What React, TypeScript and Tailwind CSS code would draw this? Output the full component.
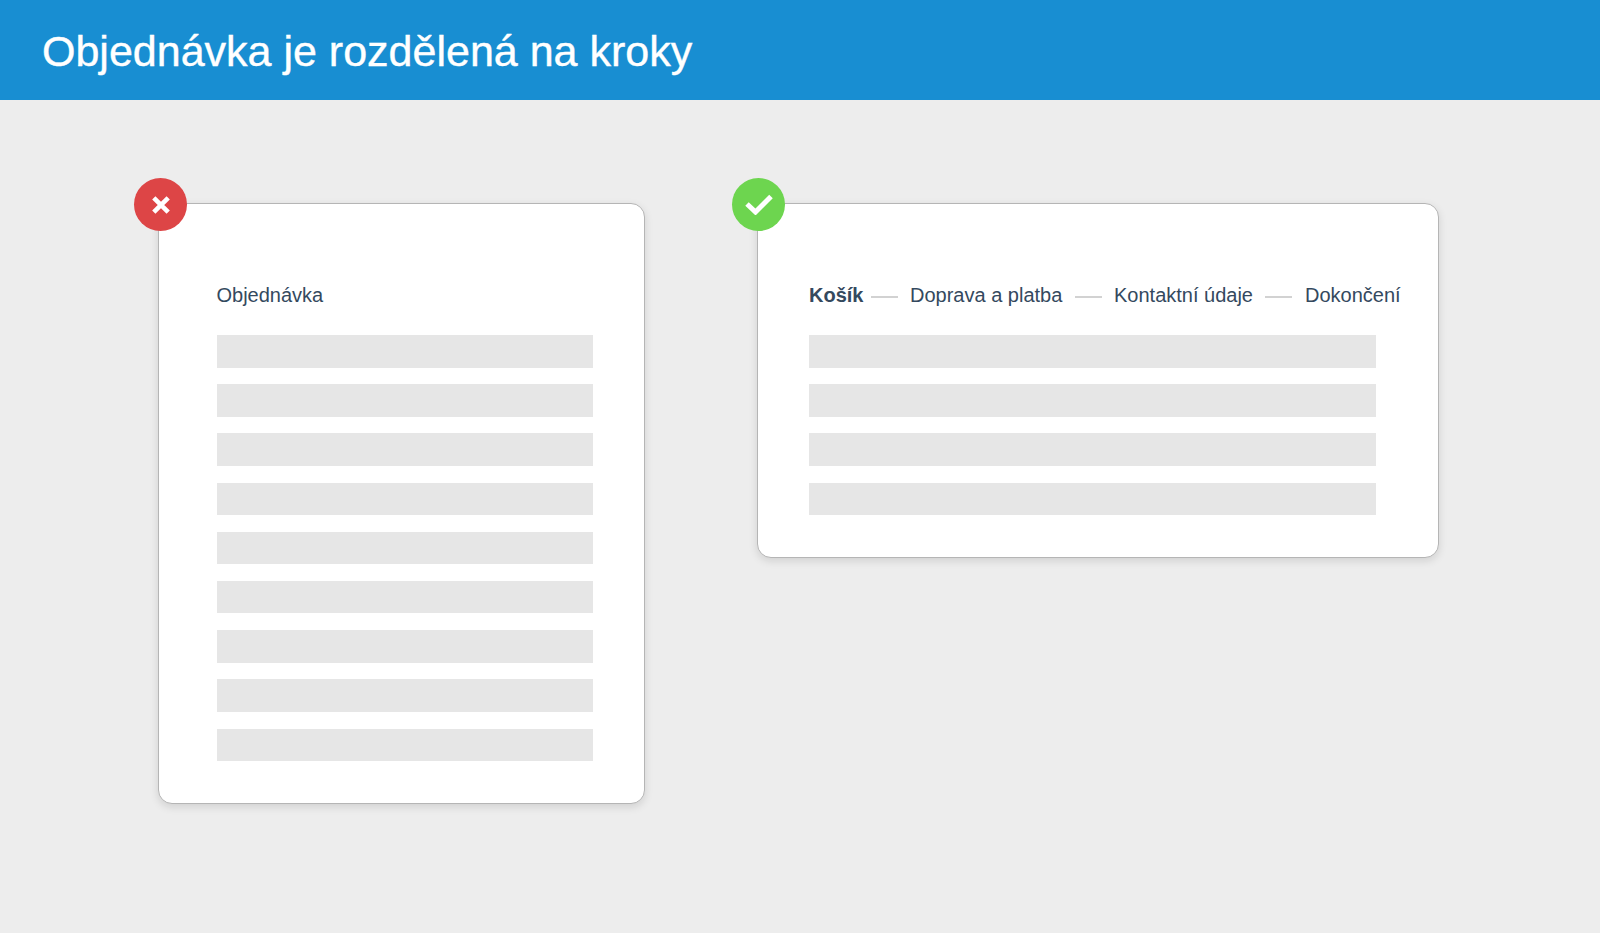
const BAR = "h-[32.5px] bg-[#e6e6e6]";

function Bars({ count, width }: { count: number; width: string }) {
  return (
    <div className="flex flex-col gap-[16.7px]">
      {Array.from({ length: count }).map((_, i) => (
        <div key={i} className={`${BAR} ${width}`} />
      ))}
    </div>
  );
}

function Dash() {
  return <div className="h-[2px] mt-[3px] w-[27px] bg-[#d2d2d2] shrink-0" />;
}

export default function App() {
  return (
    <div className="w-[1600px] h-[933px] overflow-hidden bg-[#ededed] font-['Liberation_Sans',Arial,sans-serif]">
      <header className="h-[100px] bg-[#188ed2] flex items-center pl-[42px] pt-[2px]">
        <h1 className="text-[43px] leading-none text-white font-normal [-webkit-text-stroke:0.4px_white]">Objednávka je rozdělená na kroky</h1>
      </header>
      <main className="flex items-start pl-[158px] pt-[103px] gap-[112px]">
        <section className="relative w-[487px] h-[601px] bg-white rounded-[14px] border border-[#b5b5b5] shadow-[0_3px_8px_rgba(0,0,0,0.12)] pl-[57.5px] pt-[79px]">
          <div className="absolute left-[-25px] top-[-26px] w-[53px] h-[53px] rounded-full bg-[#dd4546] flex items-center justify-center">
            <svg width="20" height="20" viewBox="0 0 20 20">
              <path d="M2.8 2.8L17.2 17.2M17.2 2.8L2.8 17.2" stroke="white" strokeWidth="4.6" strokeLinecap="butt" fill="none" />
            </svg>
          </div>
          <div className="h-[24px] leading-[24px] text-[20px] text-[#34495e]">Objednávka</div>
          <div className="mt-[28px]">
            <Bars count={9} width="w-[376px]" />
          </div>
        </section>
        <section className="relative w-[682px] h-[355px] bg-white rounded-[14px] border border-[#b5b5b5] shadow-[0_3px_8px_rgba(0,0,0,0.12)] pl-[51px] pt-[79px]">
          <div className="absolute left-[-26px] top-[-26px] w-[53px] h-[53px] rounded-full bg-[#6dd54f] flex items-center justify-center">
            <svg className="mb-[2px]" width="28" height="22" viewBox="0 0 28 22">
              <path d="M2 11L10.5 19L26 3.5" stroke="white" strokeWidth="5" fill="none" />
            </svg>
          </div>
          <div className="h-[24px] leading-[24px] text-[20px] text-[#34495e] flex items-center whitespace-nowrap">
            <span className="font-bold w-[62px]">Košík</span>
            <Dash />
            <span className="ml-[12px] w-[165px]">Doprava a platba</span>
            <Dash />
            <span className="ml-[12px] w-[151px]">Kontaktní údaje</span>
            <Dash />
            <span className="ml-[13px]">Dokončení</span>
          </div>
          <div className="mt-[28px]">
            <Bars count={4} width="w-[567px]" />
          </div>
        </section>
      </main>
    </div>
  );
}
